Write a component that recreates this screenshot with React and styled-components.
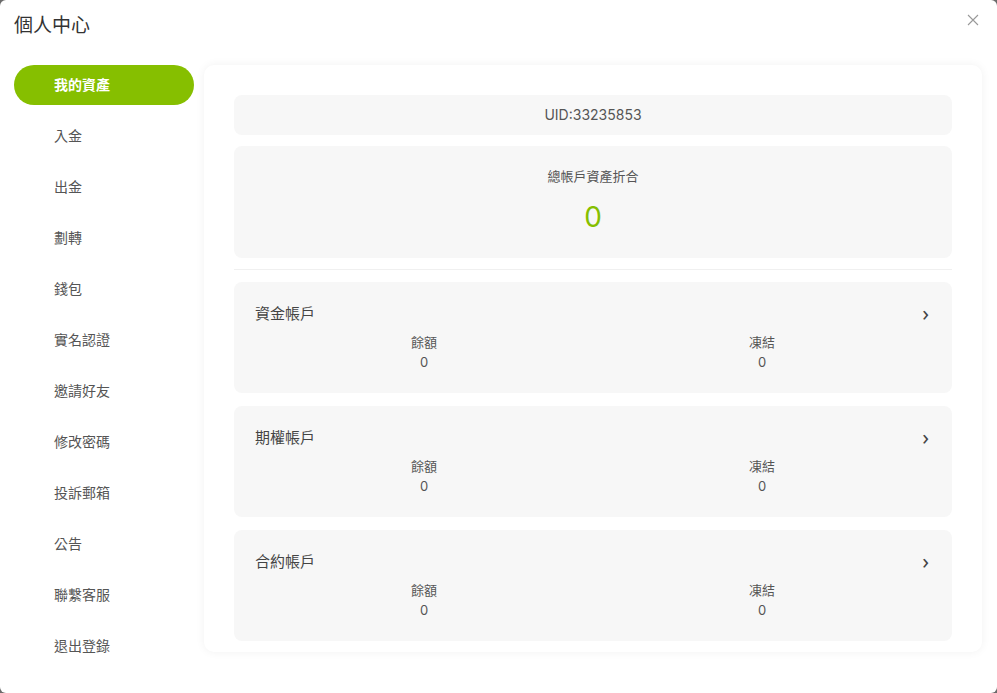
import React from 'react'
import styled, { createGlobalStyle } from 'styled-components'

const Global = createGlobalStyle`
  html, body {
    margin: 0;
    padding: 0;
    background: #6b6b6b;
    font-family: "Noto Sans CJK TC", "Liberation Sans", sans-serif;
  }
  * { box-sizing: border-box; }
`
const Modal = styled.div`
  width: 997px;
  height: 693px;
  background: #fff;
  border-radius: 6px;
  position: relative;
  display: flex;
  flex-direction: column;
  overflow: hidden;
`
const Header = styled.div`
  height: 51px;
  padding: 11px 14px 0;
  font-size: 19px;
  color: #333;
  line-height: 26px;
`
const Close = styled.button`
  position: absolute;
  top: 9px;
  right: 13px;
  width: 22px;
  height: 22px;
  border: none;
  background: none;
  padding: 0;
  cursor: pointer;
  display: flex;
  align-items: center;
  justify-content: center;
`
const Body = styled.div`
  display: flex;
  padding: 14px 15px 0 14px;
  gap: 10px;
`
const Side = styled.ul`
  list-style: none;
  margin: 0;
  padding: 0;
  width: 180px;
  display: flex;
  flex-direction: column;
  gap: 11px;
`
const Item = styled.li`
  height: 40px;
  border-radius: 20px;
  padding: 0 0 2px 40px;
  display: flex;
  align-items: center;
  font-size: 14px;
  color: ${p => (p.active ? '#fff' : '#555')};
  background: ${p => (p.active ? '#86bf00' : 'transparent')};
  font-weight: ${p => (p.active ? 600 : 400)};
`
const Panel = styled.div`
  flex: 1;
  height: 587px;
  background: #fff;
  border-radius: 10px;
  box-shadow: 0 0 10px rgba(0, 0, 0, 0.06);
  padding: 30px 30px 0;
  display: flex;
  flex-direction: column;
`
const Uid = styled.div`
  height: 40px;
  border-radius: 8px;
  background: #f7f7f7;
  display: flex;
  align-items: center;
  justify-content: center;
  padding-bottom: 2px;
  font-size: 14px;
  color: #555;
  font-family: "Inter", "Noto Sans CJK TC", sans-serif;
`
const Total = styled.div`
  margin-top: 11px;
  height: 112px;
  border-radius: 8px;
  background: #f7f7f7;
  display: flex;
  flex-direction: column;
  align-items: center;
  padding-top: 20px;
`
const TotalLabel = styled.div`
  font-size: 13px;
  color: #555;
  line-height: 20px;
`
const TotalValue = styled.div`
  margin-top: 13px;
  font-size: 28px;
  color: #86bf00;
  line-height: 36px;
  font-family: "Inter", sans-serif;
`
const Divider = styled.div`
  margin-top: 11px;
  height: 1px;
  background: #f0f0f0;
`
const Accounts = styled.div`
  margin-top: 12px;
  display: flex;
  flex-direction: column;
  gap: 13px;
`
const Card = styled.div`
  height: 111px;
  border-radius: 8px;
  background: #f7f7f7;
  padding: 19px 21px 0;
`
const CardHead = styled.div`
  display: flex;
  justify-content: space-between;
  align-items: center;
  height: 22px;
  font-size: 15px;
  color: #444;
`
const Chevron = styled.span`
  margin-right: 2px;
  font-size: 22px;
  color: #444;
  font-family: "Noto Sans", sans-serif;
  line-height: 22px;
`
const Cols = styled.div`
  display: flex;
  margin-top: 9px;
`
const Col = styled.div`
  flex: 1;
  text-align: center;
  font-size: 13px;
  color: #555;
  line-height: 20px;
`
const Num = styled.div`
  font-family: "Inter", sans-serif;
`

const menu = ['我的資產', '入金', '出金', '劃轉', '錢包', '實名認證', '邀請好友', '修改密碼', '投訴郵箱', '公告', '聯繫客服', '退出登錄']
const accounts = ['資金帳戶', '期權帳戶', '合約帳戶']

export default function App() {
  return (
    <>
      <Global />
      <Modal>
        <Header>個人中心</Header>
        <Close aria-label="close">
          <svg width="12" height="12" viewBox="0 0 12 12">
            <path d="M1 1L11 11M11 1L1 11" stroke="#999" strokeWidth="1.1" />
          </svg>
        </Close>
        <Body>
          <Side>
            {menu.map((m, i) => (
              <Item key={m} active={i === 0}>{m}</Item>
            ))}
          </Side>
          <Panel>
            <Uid>UID:33235853</Uid>
            <Total>
              <TotalLabel>總帳戶資產折合</TotalLabel>
              <TotalValue>0</TotalValue>
            </Total>
            <Divider />
            <Accounts>
              {accounts.map(a => (
                <Card key={a}>
                  <CardHead>
                    <span>{a}</span>
                    <Chevron>›</Chevron>
                  </CardHead>
                  <Cols>
                    <Col>餘額<Num>0</Num></Col>
                    <Col>凍結<Num>0</Num></Col>
                  </Cols>
                </Card>
              ))}
            </Accounts>
          </Panel>
        </Body>
      </Modal>
    </>
  )
}
